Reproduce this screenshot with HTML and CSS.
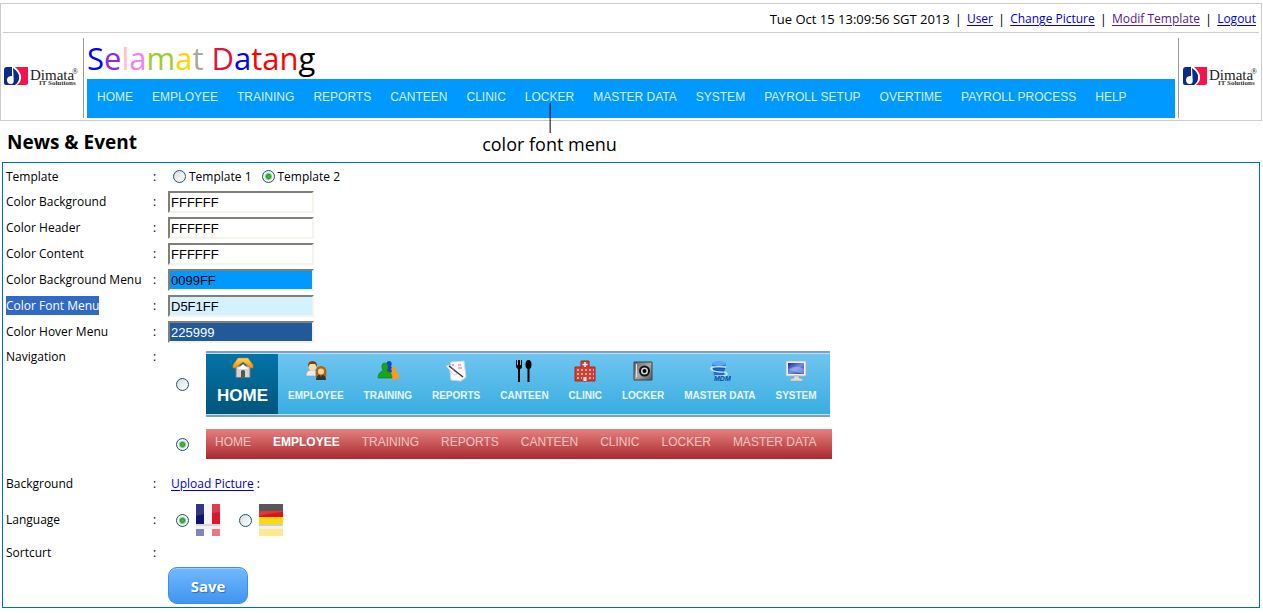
FILE: index.html
```html
<!DOCTYPE html>
<html lang="en">
<head>
<meta charset="utf-8">
<title>Modif Template</title>
<link rel="stylesheet" href="styles.css">
</head>
<body>
<svg class="defs" aria-hidden="true">
  <defs>
    <linearGradient id="gold" x1="0" y1="0" x2="0" y2="1"><stop offset="0" stop-color="#ffd76a"/><stop offset="1" stop-color="#f08c00"/></linearGradient>
    <linearGradient id="steel" x1="0" y1="0" x2="1" y2="1"><stop offset="0" stop-color="#666"/><stop offset=".5" stop-color="#aaa"/><stop offset="1" stop-color="#555"/></linearGradient>
    <linearGradient id="screen" x1="0" y1="0" x2="1" y2="1"><stop offset="0" stop-color="#1c2c9c"/><stop offset=".5" stop-color="#6f8ee0"/><stop offset="1" stop-color="#2438a8"/></linearGradient>
    <symbol id="logo" viewBox="0 0 75 22">
      <path fill="#0b2a8c" d="M3 1h5v9Q3 10 3 14q0 4 4 4 3 0 3-4V4q5 3 5 8 0 4-4 7H2q-2 0-2-2V4q0-3 3-3z"/>
      <circle cx="6.500" cy="13.500" r="2.600" fill="#fff"/>
      <path fill="#0b2a8c" d="M9 2q6 4 6 9 0 4-5 8z"/>
      <path fill="#f5124e" d="M11 1h13v16q0 2-2 2h-9q5-4 4-9-1-5-6-9z"/>
      <text x="26" y="14" class="logo-name">Dimata</text>
      <text x="68" y="8" class="logo-mark">®</text>
      <text x="35" y="19" class="logo-sub">IT Solutions</text>
    </symbol>
  </defs>
</svg>

<header class="header">
  <div class="topbar">
    <span>Tue Oct 15 13:09:56 SGT 2013</span><span>|</span><a href="#user">User</a><span>|</span><a href="#picture">Change Picture</a><span>|</span><a href="#template" class="visited">Modif Template</a><span>|</span><a href="#logout">Logout</a>
  </div>
  <div class="banner">
    <div class="brand brand-left"><svg class="logo" role="img" aria-label="Dimata IT Solutions"><use href="#logo"/></svg></div>
    <div class="banner-main">
      <h1 class="welcome"><span class="c-blue">S</span><span class="c-violet">e</span><span class="c-pink">l</span><span class="c-orchid">a</span><span class="c-green">m</span><span class="c-gold">a</span><span class="c-gray">t</span> <span class="c-crimson">D</span><span class="c-blue">a</span><span class="c-red">t</span><span class="c-red">a</span><span class="c-red">n</span>g</h1>
      <nav>
        <ul class="menu">
          <li><a href="#">HOME</a></li>
          <li><a href="#">EMPLOYEE</a></li>
          <li><a href="#">TRAINING</a></li>
          <li><a href="#">REPORTS</a></li>
          <li><a href="#">CANTEEN</a></li>
          <li><a href="#">CLINIC</a></li>
          <li class="noted"><a href="#">LOCKER</a><span class="note">color font menu</span></li>
          <li><a href="#">MASTER DATA</a></li>
          <li><a href="#">SYSTEM</a></li>
          <li><a href="#">PAYROLL SETUP</a></li>
          <li><a href="#">OVERTIME</a></li>
          <li><a href="#">PAYROLL PROCESS</a></li>
          <li><a href="#">HELP</a></li>
        </ul>
      </nav>
    </div>
    <div class="brand brand-right"><svg class="logo" role="img" aria-label="Dimata IT Solutions"><use href="#logo"/></svg></div>
  </div>
</header>

<main>
  <h2 class="title">News &amp; Event</h2>
  <form class="panel">
    <div class="row row-template"><span>Template</span><span>:</span>
      <div class="choices">
        <label class="choice"><input type="radio" name="template">Template 1</label>
        <label class="choice"><input type="radio" name="template" checked>Template 2</label>
      </div>
    </div>
    <div class="row"><label for="bg">Color Background</label><span>:</span><input class="field" id="bg" type="text" value="FFFFFF"></div>
    <div class="row"><label for="hd">Color Header</label><span>:</span><input class="field" id="hd" type="text" value="FFFFFF"></div>
    <div class="row"><label for="ct">Color Content</label><span>:</span><input class="field" id="ct" type="text" value="FFFFFF"></div>
    <div class="row"><label for="bm">Color Background Menu</label><span>:</span><input class="field field-menu" id="bm" type="text" value="0099FF"></div>
    <div class="row"><label for="fm"><mark>Color Font Menu</mark></label><span>:</span><input class="field field-font" id="fm" type="text" value="D5F1FF"></div>
    <div class="row"><label for="hm">Color Hover Menu</label><span>:</span><input class="field field-hover" id="hm" type="text" value="225999"></div>

    <div class="row row-nav"><span>Navigation</span><span>:</span>
      <div class="previews">
        <label class="preview">
          <input type="radio" name="navigation">
          <span class="sky">
            <span class="tile tile-home"><svg viewBox="0 0 22 22"><path fill="#d5d5d5" stroke="#777" d="M4 9h14v11.500H4z"/><path fill="#555" d="M9 14q2-2 4 0v6.500H9z"/><path fill="#fff" d="M6 12l5-5 5 5z"/><path fill="url(#gold)" stroke="#c87808" stroke-width=".6" d="M11 1H6L1 8v3h2.500L11 5l7.500 6H21V8l-5-7z"/></svg>HOME</span>
            <span class="tile"><svg viewBox="0 0 22 22"><path fill="#e8ebf3" stroke="#9297ab" stroke-width=".6" d="M1 16q0-6 5-6h3q4 0 4 6z"/><circle cx="7.500" cy="6.500" r="4" fill="#ffd9a0"/><path fill="#77420f" d="M3 7q-.5-6 4.500-6 5 0 4.500 6l-2-3-5 0z"/><path fill="#a8681c" d="M11 17q-2-11 5-11t5 11z"/><circle cx="16" cy="11.500" r="3" fill="#ffd08a"/><path fill="#353535" d="M11 20q0-5 4-5l1 2 1-2q4 0 4 5z"/></svg>EMPLOYEE</span>
            <span class="tile"><svg viewBox="0 0 22 22"><path fill="#1742cf" d="M8 13q0-6 3-6-3-6 1-6t2 6q3 0 3 7z"/><path fill="#ff9a17" d="M12 19q0-7 3-7-2-5 1.500-5t2.500 5q3 0 3 7z"/><path fill="#16a51c" stroke="#087b11" stroke-width=".6" d="M1 18q0-6 5-7-3-8 2-8t2 8q5 1 5 7z"/></svg>TRAINING</span>
            <span class="tile"><svg viewBox="0 0 22 22"><path fill="#fafafa" stroke="#cfd6da" d="M6 2l13-1 2 16-5 4-10-1-1-9z"/><path fill="#fff" stroke="#bbb" stroke-width=".6" d="M1 6l3-1 8 9-3 1z"/><path stroke="#333" stroke-width="1.300" d="M4 6l14 11"/><path stroke="#f66" stroke-width="1.200" d="M8 4v2M8 8v2M13 5h3M13 8h4"/></svg>REPORTS</span>
            <span class="tile"><svg viewBox="0 0 22 22"><path fill="#000" d="M3 0h1v5h1V0h2v5h1V0h1v6q0 3-2 3V22H5V9Q3 8 3 6z"/><ellipse cx="15.500" cy="4.500" rx="3" ry="4.500"/><path d="M14.500 7h2v15h-2z"/></svg>CANTEEN</span>
            <span class="tile"><svg viewBox="0 0 22 22"><path fill="#ed3324" stroke="#963028" d="M7 1h8v6h6v14H1V7h6z"/><path fill="none" stroke="#fff" stroke-width="1.500" d="M11 2v5M8.500 4.500h5"/><path stroke="#90c8d8" stroke-width="2" stroke-dasharray="2 2" d="M3 10h17M3 14h17M3 18h5M15 18h5"/><path fill="#fff" d="M9.500 17h3v4h-3z"/></svg>CLINIC</span>
            <span class="tile"><svg viewBox="0 0 22 22"><path fill="url(#steel)" stroke="#3d4246" d="M2 2h18v18H2z"/><path stroke="#e5e5e5" d="M4.500 4v13"/><circle cx="12.500" cy="11" r="4.500" fill="#ddd" stroke="#111" stroke-width="2"/><circle cx="12.500" cy="11" r="2"/></svg>LOCKER</span>
            <span class="tile"><svg viewBox="0 0 22 22"><path fill="#2069d5" d="M3 3l2 12q5 4 10 0l2-12z"/><ellipse cx="10" cy="3.500" rx="7" ry="2.500" fill="#62a5f2"/><path fill="none" stroke="#c8e5ff" stroke-width="1.500" d="M17 7Q0 6 2 9t14 3q5 3-2 4H6"/><path fill="none" stroke="#1457b7" d="M16 8.500Q4 7.500 4 9t11 2"/><text x="5" y="21" class="mdm">MDM</text></svg>MASTER DATA</span>
            <span class="tile"><svg viewBox="0 0 22 22"><path fill="#eee" stroke="#aab4c0" stroke-width=".8" d="M1 1h20v15H1z"/><path fill="url(#screen)" d="M3 3h16v11H3z"/><path fill="#b9c5ef" opacity=".5" d="M3 10Q10 4 19 9V14z"/><path fill="#ddd" stroke="#999" stroke-width=".5" d="M9 16h5v2q4 0 4 3H5q0-3 4-3z"/></svg>SYSTEM</span>
          </span>
        </label>
        <label class="preview">
          <input type="radio" name="navigation" checked>
          <span class="red"><span>HOME</span><b>EMPLOYEE</b><span>TRAINING</span><span>REPORTS</span><span>CANTEEN</span><span>CLINIC</span><span>LOCKER</span><span>MASTER DATA</span></span>
        </label>
      </div>
    </div>

    <div class="row row-upload"><span>Background</span><span>:</span><div class="upload"><a href="#upload">Upload Picture</a> :</div></div>
    <div class="row row-language"><span>Language</span><span>:</span>
      <div class="languages">
        <label class="language"><input type="radio" name="language" aria-label="French" checked><svg class="flag" viewBox="0 0 24 32"><path fill="#11116e" d="M0 0h8v20H0z"/><path fill="#f4f4f6" d="M8 0h8v20H8z"/><path fill="#dc1830" d="M16 0h8v20h-8z"/><path fill="#fff" opacity=".15" d="M0 0h24v8Q10 9 0 12z"/><path fill="#d8d8d8" d="M0 20h24v2H0z"/><path fill="#f1f1f1" d="M0 22h24v3H0z"/><path fill="#8585bd" d="M0 25h8v7H0z"/><path fill="#eb7784" d="M16 25h8v7h-8z"/></svg></label>
        <label class="language"><input type="radio" name="language" aria-label="German"><svg class="flag" viewBox="0 0 24 32"><path fill="#3a3a3a" d="M0 0h24v7H0z"/><path fill="#df1515" d="M0 7h24v6H0z"/><path fill="#ffd90f" d="M0 13h24v7H0z"/><path fill="#fff" opacity=".15" d="M0 0h24v8Q10 9 0 12z"/><path fill="#d4cfc0" d="M0 20h24v2H0z"/><path fill="#f1f1f1" d="M0 22h24v3H0z"/><path fill="#fbeb8d" d="M0 25h24v7H0z"/></svg></label>
      </div>
    </div>
    <div class="row row-shortcut"><span>Sortcurt</span><span>:</span></div>
    <div class="actions"><button class="save" type="button">Save</button></div>
  </form>
</main>
</body>
</html>
```

FILE: styles.css
```css
* { box-sizing: border-box; }
body {
  margin: 0;
  padding: 3px 1px 0 0;
  background: #fff;
  color: #000;
  font: 12px/16px "Open Sans", "Noto Sans", sans-serif;
}
a { color: #0000d8; text-underline-offset: 2px; }
a.visited { color: #551a8b; }
.defs { position: absolute; width: 0; height: 0; }

.header { border: 1px solid #ccc; padding: 0 2px 2px; }
.topbar {
  display: flex;
  justify-content: flex-end;
  gap: 5px;
  padding: 7px 3px 5px;
  border-bottom: 1px solid #ccc;
  font-size: 13px;
}
.topbar a { font-size: 12px; }
.banner { display: flex; gap: 3px; padding-top: 5px; }
.brand { display: flex; align-items: center; flex: none; width: 81px; padding-bottom: 3px; }
.brand-left { padding-left: 1px; border-right: 1px solid #999; }
.brand-right { padding-left: 4px; border-left: 1px solid #999; }
.logo { width: 75px; height: 22px; }
.logo-name { font: 15px "Liberation Serif", serif; fill: #222; }
.logo-mark { font: 8px "Liberation Serif", serif; fill: #222; }
.logo-sub { font: bold 7px "Liberation Serif", serif; fill: #333; }
.mdm { font: italic bold 7px "Liberation Sans", sans-serif; fill: #0a4ba0; }
.banner-main { flex: 1; min-width: 0; }
.welcome { margin: 0; font-size: 31px; font-weight: 400; line-height: 41px; }
.c-blue { color: #00f; }
.c-violet { color: #8a2be2; }
.c-pink { color: #ffc0cb; }
.c-orchid { color: #ee82ee; }
.c-green { color: #9acd32; }
.c-gold { color: #ffd700; }
.c-gray { color: #a9a99a; }
.c-crimson { color: #dc143c; }
.c-red { color: #f00; }

.menu {
  display: flex;
  gap: 19px;
  margin: 0;
  padding: 10px 10px 13px;
  list-style: none;
  background: #09f;
  font: 12px/16px "Liberation Sans", Arial, sans-serif;
  white-space: nowrap;
}
.menu a { color: #d5f1ff; text-decoration: none; }
.noted { position: relative; }
.note {
  position: absolute;
  top: 43px;
  left: 50%;
  transform: translateX(-50%);
  color: #000;
  font: 18px/24px "Open Sans", sans-serif;
}
.note::before {
  content: "";
  position: absolute;
  left: 50%;
  bottom: 100%;
  height: 30px;
  margin-bottom: -1px;
  border-left: 1px solid #000;
}

.title { margin: 0; padding: 9px 7px 8px; font-size: 19px; line-height: 24px; }
.panel { margin: 0 2px; padding: 1px 3px 3px; border: 1px solid #0066e8; }
.row {
  display: grid;
  grid-template-columns: 147px 15px 1fr;
  align-items: center;
  min-height: 26px;
}
.row-template { min-height: 25px; }
mark { background: #316ac5; color: #fff; padding: 1px 0; }
.field {
  width: 146px;
  height: 22px;
  margin: 0;
  padding: 0 1px;
  border: 2px solid;
  border-color: #808078 #f4f3ec #f4f3ec #808078;
  background: #fff;
  color: #000;
  font: 13px/16px "Liberation Sans", Arial, sans-serif;
}
.field-menu { background: #09f; }
.field-font { background: #d5f1ff; }
.field-hover { background: #225999; color: #fff; }

input[type="radio"] {
  appearance: none;
  flex: none;
  width: 13px;
  height: 13px;
  margin: 0;
  border: 1px solid #1c5180;
  border-radius: 50%;
  background: linear-gradient(135deg, #dcdcd7, #fff);
}
input[type="radio"]:checked {
  background: radial-gradient(circle, #45cf45 0, #21a121 2px, #f2f2ee 4px);
}
.choices { display: flex; gap: 10px; padding-left: 5px; }
.choice { display: flex; align-items: center; gap: 3px; }

.row-nav { align-items: start; padding-top: 4px; }
.previews { display: grid; gap: 12px; padding: 2px 0 12px 8px; }
.preview { display: flex; align-items: center; gap: 17px; }
.sky {
  display: flex;
  height: 66px;
  gap: 20px;
  padding-right: 13px;
  border: solid #7d9fcf;
  border-width: 2px 0;
  background: linear-gradient(#70c5ef, #38ade2);
  box-shadow: inset 0 1px #b5e3fa, inset 0 -1px #b5e3fa;
  color: #e6f7ff;
  font: bold 10px/16px "Liberation Sans", Arial, sans-serif;
  white-space: nowrap;
}
.tile { display: flex; flex-direction: column; align-items: center; gap: 6px; padding-top: 7px; }
.tile svg { width: 22px; height: 22px; }
.tile-home {
  gap: 9px;
  margin: 1px -10px 1px 0;
  padding: 3px 10px 0 11px;
  background: linear-gradient(#0274a8, #02557c);
  color: #fff;
  font-size: 17px;
}
.red {
  display: flex;
  gap: 22px;
  padding: 5px 16px 9px 9px;
  background: linear-gradient(#e58181, #a9292c);
  color: #f0c4c4;
  font: 12px/16px "Liberation Sans", Arial, sans-serif;
  white-space: nowrap;
}
.red b { color: #fff; }

.upload { padding-left: 3px; }
.languages { display: flex; gap: 19px; padding-left: 8px; }
.language { display: flex; align-items: center; gap: 7px; }
.flag { width: 24px; height: 32px; }
.row-language { min-height: 46px; }
.row-shortcut { min-height: 20px; }
.actions { padding: 4px 0 0 162px; }
.save {
  width: 80px;
  height: 37px;
  border: 1px solid #3f8fe0;
  border-radius: 9px;
  background: linear-gradient(#73b8ff, #4095ee);
  box-shadow: inset 0 1px #9ccfff;
  color: #fff;
  font: bold 15px/20px "Open Sans", sans-serif;
  text-shadow: 1px 1px 1px #2a6cb5;
}
```
